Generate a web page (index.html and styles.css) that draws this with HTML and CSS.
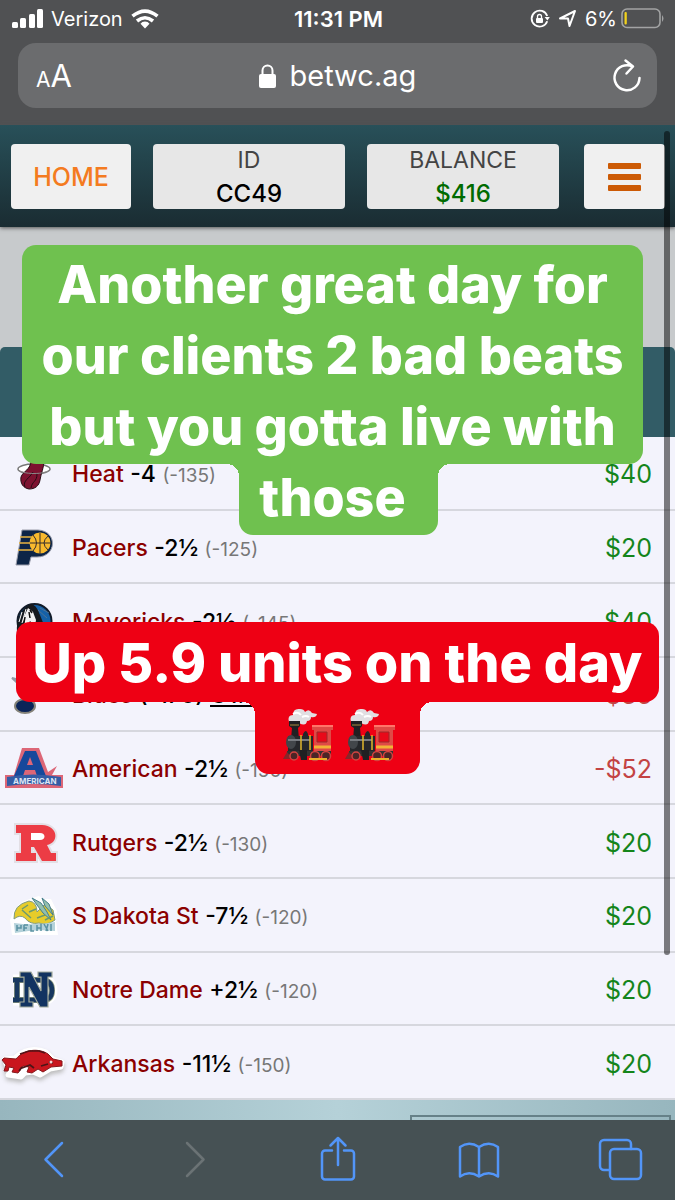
FILE: index.html
```
<!DOCTYPE html>
<html lang="en">
<head>
  <meta charset="utf-8">
  <meta name="viewport" content="width=device-width, initial-scale=1">
  <title>betwc.ag</title>
  <link rel="stylesheet" href="styles.css">
</head>
<body>
  <div class="browser">
    <div class="status">
      <div class="status-left">
        <svg width="31" height="20" viewBox="0 0 31 20" fill="#fff"><rect x="0" y="13" width="6" height="6" rx="1.5"/><rect x="8" y="9" width="6" height="10" rx="1.5"/><rect x="17" y="5" width="6" height="14" rx="1.5"/><rect x="25" y="0" width="6" height="19" rx="1.5"/></svg>
        <span>Verizon</span>
        <svg width="28" height="20" viewBox="0 0 28 20" fill="none" stroke="#fff" stroke-width="3.6"><path d="M1.5 7.2Q14-3 26.500 7.200M6 12Q14 5.500 22 12"/><path d="M14 12.500q3 0 4.500 2.200L14 19.500l-4.500-4.800Q11 12.500 14 12.500z" fill="#fff" stroke="none"/></svg>
      </div>
      <span class="time">11:31 PM</span>
      <div class="status-right">
        <svg width="20" height="20" viewBox="0 0 20 20" fill="none" stroke="#fff" stroke-width="1.800"><path d="M17.200 12.200A8 8 0 1 1 17.200 7"/><path d="M14.600 8h5.200l-2.400 3.500z" fill="#fff" stroke="none"/><rect x="6" y="9" width="7" height="5" rx="1" fill="#fff" stroke="none"/><path d="M7.500 9V7.500a2 2 0 0 1 4 0V9" stroke-width="1.300"/></svg>
        <svg width="19" height="19" viewBox="0 0 19 19" fill="none" stroke="#fff" stroke-width="2" stroke-linejoin="round"><path d="M2 9.500 17 2l-5.500 15-1.500-7.500z"/></svg>
        <span>6%</span>
        <svg class="battery" width="44" height="21" viewBox="0 0 44 21"><rect x="1" y="1" width="38" height="18.500" rx="5" fill="none" stroke="#a2a3a4" stroke-width="1.600"/><rect x="3.500" y="4" width="2.300" height="12.500" rx="1" fill="#f2d21c"/><path d="M41 7v7q3-3.500 0-7z" fill="#a2a3a4"/></svg>
      </div>
    </div>
    <div class="address">
      <button class="text-size" type="button" aria-label="Text size"><small>A</small>A</button>
      <span class="url">
        <svg width="17" height="24" viewBox="0 0 17 24"><rect y="10" width="17" height="14" rx="2" fill="#fff"/><path d="M3.500 11V6.500a5 5 0 0 1 10 0V11" fill="none" stroke="#fff" stroke-width="2"/></svg>
        betwc.ag
      </span>
      <button type="button" aria-label="Reload">
        <svg width="28" height="34" viewBox="0 0 28 34" fill="none" stroke="#fff" stroke-width="2.500" stroke-linecap="round" stroke-linejoin="round"><path d="M26.500 19A12.500 12.500 0 1 1 19.500 7.500M12.500 1.500 20 7.500l-6.500 7"/></svg>
      </button>
    </div>
  </div>

  <header class="site-head">
    <a class="tile home" href="#">HOME</a>
    <div class="tile info"><span>ID</span><strong>CC49</strong></div>
    <div class="tile info"><span>BALANCE</span><strong class="money">$416</strong></div>
    <button class="tile menu" type="button" aria-label="Menu"><i></i><i></i><i></i></button>
  </header>

  <main>
    <div class="spacer"></div>
    <div class="panel-head"></div>
    <table class="bets">
      <tr>
        <td class="logo"><svg width="60" height="60" viewBox="0 0 60 60"><ellipse cx="34" cy="25" rx="16" ry="5" fill="#fff" stroke="#777" stroke-width="1.500"/><path d="M31 16h13c0 8-3 13-4 20-1 6-5 9-11 9-6-1-9-6-8-12 2-6 10-7 10-17z" fill="#7d1230" stroke="#270b14"/><path d="M25 43c-3-6 5-9 8-15M31 44c1-7 6-6 6-14" fill="none" stroke="#270b14"/><path d="M18 25c2 6 30 6 32 0" fill="none" stroke="#888"/></svg></td>
        <td class="team"><b>Heat</b> <strong>-4</strong> <span>(-135)</span></td>
        <td class="win">$40</td>
      </tr>
      <tr>
        <td class="logo"><svg width="60" height="60" viewBox="0 0 60 60"><path d="M22 12h16c20 1 19 27-1 27h-6l-2 8H16z" fill="#0d2547" stroke="#9a9dab"/><circle cx="40" cy="25" r="10.500" fill="#f8b92d"/><path d="M20 19h12M19 25h11M18 32h16" stroke="#e9b442" stroke-width="1.300"/><path d="M30 25h21M40 15v21M33 17q7 8 0 16M48 18q-8 7 0 14" fill="none" stroke="#342c2d"/></svg></td>
        <td class="team"><b>Pacers</b> <strong>-2½</strong> <span>(-125)</span></td>
        <td class="win">$20</td>
      </tr>
      <tr>
        <td class="logo"><svg width="60" height="60" viewBox="0 0 60 60"><circle cx="34.500" cy="29" r="17" fill="#1461a8" stroke="#121c2a" stroke-width="2"/><path d="M17 41c-1-15 4-24 14-29 5 1 7 6 9 11l6 15-13-5-8 11z" fill="#15191e"/><path d="m28 16 5 4 3 8-1 6-5-5-4 8-3-10z" fill="#f2f2f3"/><path d="m22 20-3 10m7-13-4 14m8-10-1 5m-4 1 2 6" stroke="#fff" stroke-width="1"/><path d="m29 20 1 6m-5-1-1 6m6-13 2 3" stroke="#111" stroke-width="1.500"/><path d="m38 18 9 8m-7-10 9 5" stroke="#4d7294"/></svg></td>
        <td class="team"><b>Mavericks</b> <strong>-2½</strong> <span>(-145)</span></td>
        <td class="win">$40</td>
      </tr>
      <tr>
        <td class="logo"><svg width="60" height="60" viewBox="0 0 60 60"><path d="m12 13 15 4 18 2-15 10-2 12-7-3 3-14z" fill="#142c5f" stroke="#939aa5" stroke-width="2"/><ellipse cx="25" cy="41" rx="10" ry="7" fill="#0b2458" stroke="#85837a" stroke-width="2"/></svg></td>
        <td class="team"><b>Blues</b> <strong>(-170) <u>O1½</u></strong></td>
        <td class="loss">-$35</td>
      </tr>
      <tr>
        <td class="logo"><svg width="60" height="60" viewBox="0 0 60 60"><path d="M22 9h17l9 24 9-6-5 9h11v13H5V36h9z" fill="#dc6677"/><path d="M25 12h11l10 25h-9l-2-6H25l-2 6h-9z" fill="#16489b"/><path d="m30 18 3 8h-6z" fill="#dc6677"/><path d="M7 38q26-5 54 0v9q-27-4-54 0z" fill="#345ca5"/><text class="banner" x="13" y="45">AMERICAN</text></svg></td>
        <td class="team"><b>American</b> <strong>-2½</strong> <span>(-150)</span></td>
        <td class="loss">-$52</td>
      </tr>
      <tr>
        <td class="logo"><svg width="60" height="60" viewBox="0 0 60 60"><path d="M16 12h26c17 1 17 18 5 20l4 8h5v8H42l-8-14h-3v6h5v8H16v-8h5V20h-5z" fill="#fff" stroke="#e3dfe5" stroke-width="4"/><path d="M16 12h26c17 1 17 18 5 20l4 8h5v8H42l-8-14h-3v6h5v8H16v-8h5V20h-5zM31 20v7h9c6 0 6-7 0-7z" fill="#ec3c45" fill-rule="evenodd"/></svg></td>
        <td class="team"><b>Rutgers</b> <strong>-2½</strong> <span>(-130)</span></td>
        <td class="win">$20</td>
      </tr>
      <tr>
        <td class="logo"><svg width="60" height="60" viewBox="0 0 60 60"><path d="m10 34 4-10 8-8 10-4 7-2 4 3h8l6 12-1 10 2 14H12z" fill="#fff"/><path d="M14 33q-1-14 15-18 8 1 8 11l8-8 8 6 2 10q-8 6-16 3-9 2-14-5-5-4-11 1z" fill="#e6cc2b" stroke="#7f9c84"/><path d="m32 12 9 5 6 9 4 8-8-7-6-8zm10 0 7 6 4 11-8-9z" fill="#93bfae" stroke="#477f8d"/><path d="m22 24 9 8m-3-13-6 4m15 9 8-3m0 5 8-4m-24-4 7-3" fill="none" stroke="#6b9a70" stroke-width="1.500"/><path d="M14 37q20 3 41-1v9q-20-2-40 2z" fill="#b4d2da"/><path d="M17 39v6m0-3h4v-3m3 0v6m0-6h4m-4 3h3m4-3v6h3m3-6v6m0-3h4m0-4v7m3-7 4 7m0-7-2 7m5-7v7" fill="none" stroke="#5a92a2" stroke-width="1.500"/></svg></td>
        <td class="team"><b>S Dakota St</b> <strong>-7½</strong> <span>(-120)</span></td>
        <td class="win">$20</td>
      </tr>
      <tr>
        <td class="logo"><svg width="60" height="60" viewBox="0 0 60 60" fill="none"><path d="M13 20h28q11 0 11 10t-11 10H13M24 15v31M43 15v31" stroke="#fff" stroke-width="11"/><path d="M13 20h28q11 0 11 10.500T41 40H13M17 20v20" stroke="#8a967e" stroke-width="6"/><path d="M13 20h28q11 0 11 10.500T41 40H13M17 20v20" stroke="#17375f" stroke-width="4.500"/><path d="M20 12h11l10 19V17h-3v-5h14v5h-4v30h-8L29 27v15h4v5H20v-5h4V17h-4z" fill="#123361" stroke="#a3ab9c" stroke-width="1.200"/></svg></td>
        <td class="team"><b>Notre Dame</b> <strong>+2½</strong> <span>(-120)</span></td>
        <td class="win">$20</td>
      </tr>
      <tr>
        <td class="logo"><svg class="hog" width="60" height="60" viewBox="0 0 60 60"><path d="m5 25 10-1c7-8 20-11 31-6l7 7 9 3-1 5-11 2-10 6-7-3-8 1-4 4-6-1-7-1 3-6-5-5z" fill="#fff" stroke="#fff" stroke-width="5" stroke-linejoin="round"/><path d="m4 24 12 1c8-10 23-11 32-5l5 5 9 2v5l-11 1-8 5-5-3-6 4-5-1 2-5-6-1-5 7-6-1 2-4-5-1-1 4h-4l2-6-4-5z" fill="#c9161e" stroke="#84171b"/><path d="m20 20 9-3h10l6 2" stroke="#531216" fill="none" stroke-width="1.500"/><path d="m22 34 8-3 4 3m7-2 7-2m1-2 4 1m-34 8 3-4" stroke="#4b1518" fill="none" stroke-width="1.800"/><circle cx="51" cy="28" r="1.500" fill="#f1d8d8"/></svg></td>
        <td class="team"><b>Arkansas</b> <strong>-11½</strong> <span>(-150)</span></td>
        <td class="win">$20</td>
      </tr>
    </table>
    <div class="page-end"><div class="outline"></div></div>
  </main>

  <nav class="toolbar">
    <button type="button" aria-label="Back"><svg width="44" height="44" viewBox="0 0 44 44"><path d="M30 5 13.500 21.500 30 38"/></svg></button>
    <button class="off" type="button" aria-label="Forward" disabled><svg width="44" height="44" viewBox="0 0 44 44"><path d="M13 5 29.500 21.500 13 38"/></svg></button>
    <button type="button" aria-label="Share"><svg width="44" height="44" viewBox="0 0 44 44"><path d="M16 12.500h-7a3 3 0 0 0-3 3v23a3 3 0 0 0 3 3h26a3 3 0 0 0 3-3v-23a3 3 0 0 0-3-3h-7M22 27V0M14.500 7.500 22 0l7.500 7.500"/></svg></button>
    <button type="button" aria-label="Bookmarks"><svg width="44" height="44" viewBox="0 0 44 44"><path d="M22 38.500V9Q12 2.500 3 9v29.500Q12 32 22 38.500 32 32 41 38.500V9Q32 2.500 22 9"/></svg></button>
    <button type="button" aria-label="Tabs"><svg width="44" height="44" viewBox="0 0 44 44"><path d="M32 11V6a4 4 0 0 0-4-4H5a4 4 0 0 0-4 4v22a4 4 0 0 0 4 4h5"/><rect x="11" y="11" width="31" height="30" rx="4"/></svg></button>
  </nav>

  <div class="scrollbar"></div>

  <div class="sticker green">
    <div class="block">Another great day for<br>our clients 2 bad beats<br>but you gotta live with</div>
    <div class="tab">those</div>
  </div>
  <div class="sticker red">
    <div class="block">Up 5.9 units on the day</div>
    <div class="tab">
      <svg width="50" height="54" viewBox="0 0 50 54">
        <g id="train">
          <path d="M5 14q-2-7 4-7 0-7 7-6 4 0 5 3 4-4 7 1l5 1q-1 4-6 3 0 4-4 4-1 6-8 2-6-2-10 0z" fill="#e1dfe2"/>
          <path d="M9 6q5-3 8 1M18 9q4-2 7 0" fill="none" stroke="#fff" stroke-width="2"/>
          <path d="M5 13h11v5l-2 2 1 11H7l1-11-3-2z" fill="#211f22"/><path d="M6 17h9" stroke="#a98b3d"/>
          <path d="M4 28h25v16H4z" fill="#25272b"/><ellipse cx="7" cy="34" rx="5" ry="7" fill="#42464a"/>
          <path d="M4 32h22" stroke="#777b80" stroke-width="2"/><path d="M17 27v15M26 27v15" stroke="#e0b62c" stroke-width="1.500"/>
          <path d="M19 28v-2q3-6 5 0v2" fill="#252529"/>
          <path d="M28 19h21v3h-2v23H30V22h-2z" fill="#df4a46"/><path d="M28 18h21" stroke="#ff7569" stroke-width="2"/>
          <path d="M33 24h10v10H33z" fill="#e90919" stroke="#9c2b2a"/><path d="M30 39h17" stroke="#f3b236" stroke-width="3"/>
          <path d="M3 43h44v5H3z" fill="#333"/><path d="m3 44-4 7h10z" fill="#87262a"/>
          <g fill="#4b2526" stroke="#d44340" stroke-width="1.500"><circle cx="10" cy="48" r="4"/><circle cx="31" cy="48" r="4.500"/><circle cx="42" cy="48" r="4.500"/></g>
          <path d="M15 42h8v10h-6z" fill="#1f2022"/><path d="M25 51h18" stroke="#e9ae2b" stroke-width="2"/>
        </g>
      </svg>
      <svg width="50" height="54" viewBox="0 0 50 54"><use href="#train"/></svg>
    </div>
  </div>
</body>
</html>
```

FILE: styles.css
```
* {
  box-sizing: border-box;
}
body {
  margin: 0;
  min-height: 100vh;
  display: flex;
  flex-direction: column;
  position: relative;
  font-family: Inter, "Liberation Sans", sans-serif;
  background-color: #c7cacc;
}
button {
  border: none;
  padding: 0;
  background: none;
  color: inherit;
  font: inherit;
  cursor: pointer;
}
svg {
  display: block;
  overflow: visible;
}

/* browser chrome */
.browser {
  height: 125px;
  background: #505153;
  color: #fff;
}
.status {
  display: grid;
  grid-template-columns: 1fr auto 1fr;
  align-items: center;
  height: 43px;
  padding: 0 10px 6px 12px;
  font-size: 20px;
}
.status-left, .status-right {
  display: flex;
  align-items: center;
  gap: 8px;
}
.status-right {
  justify-content: flex-end;
}
.battery {
  margin-left: -4px;
}
.time {
  font-size: 22px;
  font-weight: 600;
}
.address {
  display: flex;
  justify-content: space-between;
  align-items: center;
  height: 65px;
  margin: 0 18px;
  padding: 0 16px 0 18px;
  border-radius: 18px;
  background: #6b6c6e;
}
.text-size {
  font-size: 31px;
}
.text-size small {
  font-size: 21px;
}
.url {
  display: flex;
  align-items: center;
  gap: 14px;
  margin-right: 10px;
  font-size: 29px;
}

/* account bar */
.site-head {
  display: flex;
  height: 102px;
  padding: 19px 10px 18px 11px;
  background: linear-gradient(#285059, #1a2c32);
  box-shadow: 0 1px 4px #555;
}
.tile {
  display: flex;
  flex-direction: column;
  align-items: center;
  justify-content: center;
  border-radius: 4px;
  background: #f0f0f0;
}
.home {
  width: 120px;
  color: #f47b20;
  font-size: 25px;
  font-weight: 500;
  text-decoration: none;
}
.info {
  flex: 1;
  margin-left: 22px;
  background: #e7e7e7;
  color: #444;
  font-size: 23px;
  line-height: 33px;
}
.info strong {
  color: #000;
  font-size: 24px;
  font-weight: 500;
}
.info .money {
  color: #006b00;
}
.menu {
  width: 81px;
  margin-left: 25px;
  gap: 5px;
}
.menu i {
  width: 33px;
  height: 6px;
  border-radius: 1px;
  background: #cc5a05;
}

/* bet list */
main {
  flex: 1;
  display: flex;
  flex-direction: column;
}
.spacer {
  height: 120px;
}
.panel-head {
  height: 90px;
  border-radius: 5px 5px 0 0;
  background: #325c66;
}
.bets {
  flex: 1;
  width: 100%;
  border-collapse: collapse;
  background: #f3f3fc;
}
.bets td {
  padding: 3px 0 0;
  border-bottom: 2px solid #d6d7de;
}
.bets .logo {
  width: 72px;
}
.hog {
  filter: drop-shadow(0 3px 2px #bbb);
}
.banner {
  fill: #dde4f2;
  font-size: 8px;
  font-weight: 700;
}
.team {
  font-size: 23px;
}
.team b {
  color: #8b0000;
  font-weight: 500;
}
.team strong {
  font-weight: 500;
}
.team span {
  color: #777;
  font-size: 19px;
  font-weight: 400;
}
.bets .win, .bets .loss {
  padding-right: 23px;
  text-align: right;
  font-size: 25px;
}
.win {
  color: #14851b;
}
.loss {
  color: #c34343;
}
.page-end {
  height: 20px;
  padding: 15px 4px 0 0;
  background: linear-gradient(90deg, #97b6be, #b5d1d8 50%, #97b6be);
}
.outline {
  width: 261px;
  height: 5px;
  margin-left: auto;
  border: 2px solid #668188;
  border-bottom: none;
}

.toolbar {
  display: flex;
  justify-content: space-between;
  height: 80px;
  padding: 18px 32px 0;
  background: #465154;
}
.toolbar button {
  height: 44px;
}
.toolbar svg {
  fill: none;
  stroke: #5295f8;
  stroke-width: 2.5;
  stroke-linecap: round;
  stroke-linejoin: round;
}
.toolbar .off svg {
  stroke: #6b7375;
}
.scrollbar {
  position: absolute;
  top: 131px;
  right: 5px;
  width: 6px;
  height: 824px;
  border-radius: 3px;
  background: rgba(0, 0, 0, 0.5);
}

/* story captions over the page */
.sticker {
  position: absolute;
  display: flex;
  flex-direction: column;
  align-items: center;
  color: #fff;
  font-size: 52px;
  font-weight: 800;
  line-height: 71px;
  text-align: center;
  white-space: nowrap;
}
.block {
  width: 100%;
  border-radius: 14px;
}
.tab {
  position: relative;
  height: 71px;
  border-radius: 0 0 14px 14px;
}
.tab::before, .tab::after {
  content: "";
  position: absolute;
  top: 0;
  width: 12px;
  height: 12px;
}
.tab::before {
  right: 100%;
  background: radial-gradient(circle at 0 100%, transparent 12px, var(--fill) 12px);
}
.tab::after {
  left: 100%;
  background: radial-gradient(circle at 100% 100%, transparent 12px, var(--fill) 12px);
}
.green {
  --fill: #6fc14f;
  top: 245px;
  left: 22px;
  right: 32px;
}
.red {
  --fill: #ee0014;
  top: 622px;
  left: 16px;
  right: 16px;
  font-size: 54px;
}
.green .block, .green .tab, .red .block, .red .tab {
  background: var(--fill);
}
.green .block {
  padding: 4px 0 2px;
}
.green .tab {
  margin-left: 12px;
  padding: 0 32px 0 20px;
  line-height: 68px;
}
.red .block {
  padding: 5px 0 4px;
}
.red .tab {
  display: flex;
  gap: 12px;
  height: 72px;
  padding: 6px 24px 0 29px;
}
```
